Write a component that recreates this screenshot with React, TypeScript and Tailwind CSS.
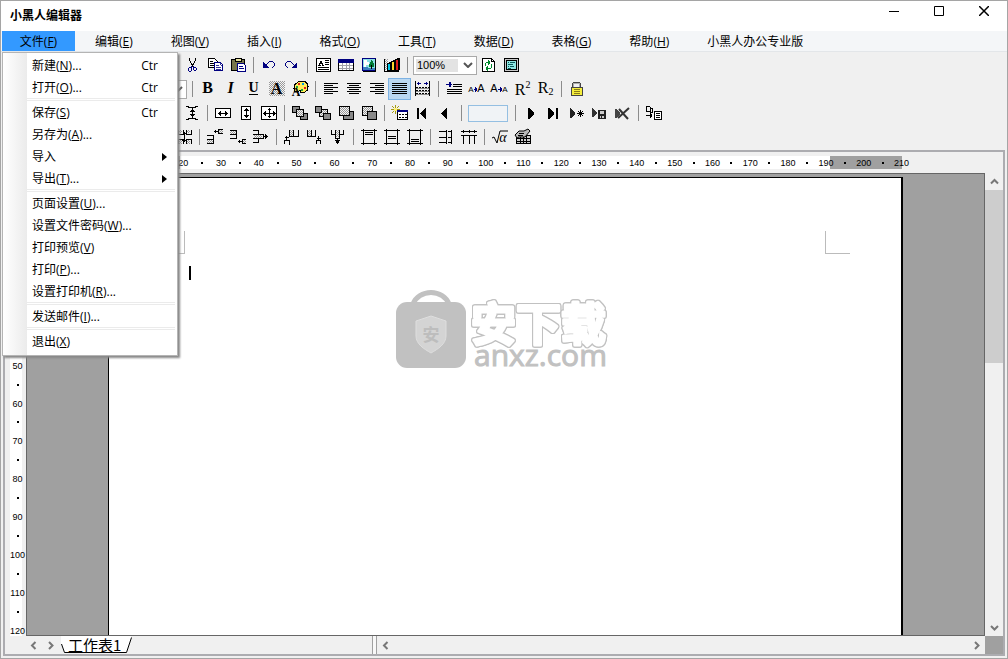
import { Fragment } from 'react'
import type { ReactNode } from 'react'

type MenuEntry = { text: string; hotkey?: string; dots?: boolean; shortcut?: string; submenu?: boolean }

const MENUS: MenuEntry[] = [
  { text: '编辑', hotkey: 'E' },
  { text: '视图', hotkey: 'V' },
  { text: '插入', hotkey: 'I' },
  { text: '格式', hotkey: 'O' },
  { text: '工具', hotkey: 'T' },
  { text: '数据', hotkey: 'D' },
  { text: '表格', hotkey: 'G' },
  { text: '帮助', hotkey: 'H' },
  { text: '小黑人办公专业版' },
]

const FILE_MENU: MenuEntry[][] = [
  [
    { text: '新建', hotkey: 'N', dots: true, shortcut: 'Ctr' },
    { text: '打开', hotkey: 'O', dots: true, shortcut: 'Ctr' },
  ],
  [
    { text: '保存', hotkey: 'S', shortcut: 'Ctr' },
    { text: '另存为', hotkey: 'A', dots: true },
    { text: '导入', submenu: true },
    { text: '导出', hotkey: 'T', dots: true, submenu: true },
  ],
  [
    { text: '页面设置', hotkey: 'U', dots: true },
    { text: '设置文件密码', hotkey: 'W', dots: true },
    { text: '打印预览', hotkey: 'V' },
    { text: '打印', hotkey: 'P', dots: true },
    { text: '设置打印机', hotkey: 'R', dots: true },
  ],
  [{ text: '发送邮件', hotkey: 'I', dots: true }],
  [{ text: '退出', hotkey: 'X' }],
]

function Label({ item }: { item: MenuEntry }) {
  return (
    <span className="whitespace-nowrap">
      {item.text}
      {item.hotkey && (
        <>
          (<span className="underline underline-offset-1">{item.hotkey}</span>)
        </>
      )}
      {item.dots && '...'}
    </span>
  )
}

function Tool({ label, active, children }: { label: string; active?: boolean; children: ReactNode }) {
  return (
    <button
      aria-label={label}
      className={`h-[22px] w-[23px] shrink-0 ${active ? 'bg-[#b9d7f1] outline outline-1 -outline-offset-1 outline-[#7db2e3]' : ''}`}
    >
      <svg width="23" height="22" viewBox="0 0 23 22" fill="none" stroke="#000" shapeRendering="crispEdges">
        <defs>
          <pattern id="dither" width="2" height="2" patternUnits="userSpaceOnUse">
            <rect width="2" height="2" fill="#f4f4f4" stroke="none" />
            <path d="M0 0h1v1h-1zM1 1h1v1h-1z" fill="#999" stroke="none" />
          </pattern>
        </defs>
        {children}
      </svg>
    </button>
  )
}

function Sep() {
  return (
    <span className="flex h-[22px] w-2 shrink-0 justify-center py-[3px]">
      <span className="w-px bg-[#8c8c8c]" />
    </span>
  )
}

function Lines({ rows }: { rows: [number, number][] }) {
  return <path d={rows.map(([x, w], i) => `M${x} ${5.5 + i * 2}h${w}`).join('')} />
}

const LEFT: [number, number][] = [[5, 14], [5, 9], [5, 14], [5, 9], [5, 14], [5, 9]]
const CENTER: [number, number][] = [[5, 14], [7, 10], [5, 14], [7, 10], [5, 14], [7, 10]]
const RIGHT: [number, number][] = [[5, 14], [10, 9], [5, 14], [10, 9], [5, 14], [10, 9]]
const FULL: [number, number][] = [[4, 15], [4, 15], [4, 15], [4, 15], [4, 15], [4, 15]]

function Letter({ children, className, x = 11.5, y = 15 }: { children: string; className: string; x?: number; y?: number }) {
  return (
    <text x={x} y={y} textAnchor="middle" fill="#000" stroke="none" className={className}>
      {children}
    </text>
  )
}

function Toolbars() {
  return (
    <div className="shrink-0 overflow-hidden py-px">
      {/* standard */}
      <div className="flex h-6 items-center pl-[179px]">
        <Tool label="剪切">
          <path d="M9.5 4v3M15.5 4v3M10.5 7v2M14.5 7v2M11.5 9v2M13.5 9v2M12.5 10v3" />
          <path d="M11.5 12v2M13.5 12v2M8.5 14v3M9 13.5h2M9 17.5h2M11.5 14v3M13.5 13v3M14 13.5h2M16.5 14v2M14 16.5h2" stroke="#000080" />
        </Tool>
        <Tool label="复制">
          <path d="M5.5 4.5h6l3 3v6h-9z" fill="#fff" />
          <path d="M7 7.5h3M7 9.5h4M7 11.5h4" />
          <path d="M11.5 8.5h6l2 2v6h-8z" fill="#fff" stroke="#000080" />
          <path d="M17.5 8v3h2M13 11.5h3M13 13.5h5M13 15.5h5" stroke="#000080" strokeWidth="0.8" />
        </Tool>
        <Tool label="粘贴">
          <path d="M5.5 5.5h13v11h-13z" fill="#77764b" />
          <path d="M9 4.5h6v3h-6z" fill="#e8e3a0" />
          <path d="M11.5 9.5h6l2 2v6h-8z" fill="#fff" stroke="#000080" />
          <path d="M13 12.5h4M13 14.5h5" stroke="#000080" />
        </Tool>
        <Sep />
        <Tool label="撤销">
          <path d="M6 8v6h6z" fill="#000080" stroke="none" />
          <path d="M9 10.5h1M10 9.5h1M11 8.5h1M12 7.5h4M16.5 8v1M17.5 9v3M16.5 12v1M15 13.5h1" stroke="#000080" />
        </Tool>
        <Tool label="恢复">
          <path d="M17 8v6h-6z" fill="#000080" stroke="none" />
          <path d="M13 10.5h1M12 9.5h1M11 8.5h1M7 7.5h4M6.5 8v1M5.5 9v3M6.5 12v1M7 13.5h1" stroke="#000080" />
        </Tool>
        <Sep />
        <Tool label="文本框">
          <path d="M5.5 4.5h14v13h-14z" fill="#fff" />
          <path d="M7 11.5h3M8.5 11v-2M9.5 9v-2M10.5 7v2M11.5 9v2M11 11.5h2M9 9.5h2M14 6.5h4M14 8.5h4M14 10.5h4M7 13.5h11M7 15.5h11" />
        </Tool>
        <Tool label="表格">
          <path d="M4.5 5.5h15v11h-15z" fill="#fff" />
          <path d="M5 11.5h14M5 14.5h14M8.5 9v7M12.5 9v7M15.5 9v7" stroke="#a0a0a8" />
          <path d="M4.5 5.5h15v11h-15z" />
          <path d="M4 5h16v4H4z" fill="#000080" stroke="none" />
        </Tool>
        <Tool label="图片">
          <path d="M5 4.5h13v12h-13z" fill="#8be0e6" stroke="#000080" />
          <path d="M18.5 5v13M6 17.5h13" />
          <path d="M7 6h3v2h2v3h-3v2h-2z" fill="#fff" stroke="none" />
          <path d="M14 6h1v1h1v2h1v4h-5v-3h1v-2h1z" fill="#007a34" stroke="none" />
          <path d="M6 13h5v1h7v2H6z" fill="#3c7fc0" stroke="none" />
          <path d="M14.5 11v4" />
        </Tool>
        <Tool label="图表">
          <path d="M5 5h3v11H5z" fill="url(#dither)" stroke="none" />
          <path d="M4.5 5v13M4 17.5h15" />
          <path d="M7.5 9.5h3v7h-3z" fill="#00c8e8" />
          <path d="M11.5 7.5h3v9h-3z" fill="#ffd52b" />
          <path d="M15.5 5.5h3v11h-3z" fill="#e01b1b" />
          <path d="M9 8.5h2M13 6.5h2M17 4.5h3M19.5 5v11" />
        </Tool>
        <Sep />
        <select
          aria-label="缩放"
          defaultValue="100%"
          className="ml-0.5 h-[19px] w-16 appearance-none border border-[#a9a9a9] bg-white bg-[linear-gradient(#e3e3e3,#e3e3e3)] bg-[length:42px_13px] bg-[position:2px_2px] bg-no-repeat pl-[3px] font-['Liberation_Sans',sans-serif] text-[11px] leading-none"
        >
          <option>100%</option>
        </select>
        <svg width="10" height="6" viewBox="0 0 10 6" className="mr-1 -ml-[14px] shrink-0" fill="none" stroke="#555" strokeWidth="2">
          <path d="M1 1l4 4 4-4" />
        </svg>
        <Tool label="刷新">
          <path d="M5.5 4.5h9l3 3v10h-12z" fill="#fff" />
          <path d="M14.5 4v3h3" />
          <path d="M8.5 12v-3M9 8.5h4M11.5 6v5M12.5 7v3M14.5 10v4M14 14.5h-4M10.5 12v5M9.5 13v3" stroke="#008a2c" />
        </Tool>
        <Tool label="属性">
          <path d="M4.5 4.5h14v13h-14z" fill="#c8c8c8" />
          <path d="M6.5 6.5h10v9h-10z" fill="#8fe6e2" />
          <path d="M8 8.5h1M10 8.5h5M8 10.5h5M8 12.5h1M10 12.5h4M8 14.5h3" stroke="#0c5c5c" />
        </Tool>
      </div>
      {/* formatting */}
      <div className="flex h-6 items-center pl-3">
        <span className="flex w-[175px] shrink-0 items-center">
          <select aria-label="字号" className="h-[19px] w-[174px] appearance-none border border-[#a9a9a9] bg-white" />
          <svg width="10" height="6" viewBox="0 0 10 6" className="-ml-[14px] shrink-0" fill="none" stroke="#555" strokeWidth="2">
            <path d="M1 1l4 4 4-4" />
          </svg>
        </span>
        <Sep />
        <Tool label="加粗">
          <Letter className="font-['Liberation_Serif',serif] text-[16px] font-bold">B</Letter>
        </Tool>
        <Tool label="倾斜">
          <Letter className="font-['Liberation_Serif',serif] text-[16px] font-bold italic">I</Letter>
        </Tool>
        <Tool label="下划线">
          <Letter y={14} className="font-['Liberation_Serif',serif] text-[14px] font-bold">U</Letter>
          <path d="M7 16.5h9" />
        </Tool>
        <Tool label="底纹">
          <rect x="4" y="3" width="16" height="15" fill="url(#dither)" stroke="none" />
          <Letter y={16} className="font-['Liberation_Serif',serif] text-[16px] font-bold">A</Letter>
        </Tool>
        <Tool label="字体颜色">
          <path d="M11 3.500h6l2 2 1 3-1 4-3 2h-3l-1-2-2 1h-3l-1-3 1-4z" fill="#ffee58" />
          <path d="M10 5h2v2h-2zM16 9h2v2h-2z" fill="#e01b1b" stroke="none" />
          <path d="M14 5h2v2h-2z" fill="#00a0e0" stroke="none" />
          <path d="M8 8h2v2H8zM13 11h2v2h-2z" fill="#1f9e3e" stroke="none" />
          <Letter x={8} y={18} className="font-['Liberation_Serif',serif] text-[12px] font-bold">A</Letter>
        </Tool>
        <Sep />
        <Tool label="左对齐"><Lines rows={LEFT} /></Tool>
        <Tool label="居中"><Lines rows={CENTER} /></Tool>
        <Tool label="右对齐"><Lines rows={RIGHT} /></Tool>
        <Tool label="两端对齐" active><Lines rows={FULL} /></Tool>
        <Tool label="分散对齐">
          <path d="M4.500 3v15M18.500 3v15" />
          <path d="M5 9.500h13M5 12.500h13M5 15.500h13" strokeDasharray="2 1" />
          <path d="M5 10.500h13M5 13.500h13M5 16.500h13" stroke="#888" />
          <path d="M6 5.500h4M7.500 4v3M13 5.500h4M15.500 4v3" stroke="#000080" />
        </Tool>
        <Sep />
        <Tool label="缩进">
          <path d="M4 6.500h6M8.500 4v5M7.500 4v5" stroke="#000080" />
          <path d="M11 6.500h9M11 8.500h9M5 11.500h15M5 13.500h15M5 15.500h15" />
        </Tool>
        <Tool label="增大字号">
          <Letter x={6} y={14} className="font-['Liberation_Sans',sans-serif] text-[8px]">A</Letter>
          <Letter x={16} y={14} className="font-['Liberation_Sans',sans-serif] text-[11px]">A</Letter>
          <path d="M9 11.500h2M10.500 9v5M11.500 10v3" stroke="#000080" />
        </Tool>
        <Tool label="减小字号">
          <Letter x={6} y={14} className="font-['Liberation_Sans',sans-serif] text-[11px]">A</Letter>
          <Letter x={17} y={14} className="font-['Liberation_Sans',sans-serif] text-[8px]">A</Letter>
          <path d="M10 11.500h2M12.500 9v5M13.500 10v3" stroke="#000080" />
        </Tool>
        <Tool label="上标">
          <Letter x={9} y={17} className="font-['Liberation_Serif',serif] text-[16px]">R</Letter>
          <Letter x={17} y={10} className="font-['Liberation_Serif',serif] text-[10px]">2</Letter>
        </Tool>
        <Tool label="下标">
          <Letter x={9} y={15} className="font-['Liberation_Serif',serif] text-[16px]">R</Letter>
          <Letter x={17} y={17} className="font-['Liberation_Serif',serif] text-[10px]">2</Letter>
        </Tool>
        <Sep />
        <Tool label="锁定">
          <path d="M7.500 10v-4l2-2h4l2 2v4" stroke="#444" />
          <path d="M8.500 10v-4l1-1h4l1 1v4" stroke="#aaa" />
          <path d="M6.500 9.500h11v8h-11z" fill="#f5ee3c" stroke="#444" />
          <path d="M9 11.500h6M9 13.500h6M9 15.500h6" stroke="#8a7c1a" />
        </Tool>
      </div>
      {/* arrange and records */}
      <div className="flex h-6 items-center pl-[179px]">
        <Tool label="行高">
          <path d="M6 4.500h3M15 4.500h3M8 5.500h8M6 17.500h3M15 17.500h3M8 16.500h8M12.500 6v10M11 8.500h3M10 9.500h5M10 12.500h5M11 13.500h3" />
        </Tool>
        <Sep />
        <Tool label="等宽">
          <path d="M4.500 6.500h15v9h-15z" fill="#fff" />
          <path d="M7 11.500h10M8.500 10v3M9.500 9v5M15.500 10v3M14.500 9v5" />
        </Tool>
        <Tool label="等高">
          <path d="M7.500 4.500h9v13h-9z" fill="#fff" />
          <path d="M12.500 6v10M11 7.500h3M10 8.500h5M11 14.500h3M10 13.500h5" />
        </Tool>
        <Tool label="等大">
          <path d="M4.500 4.500h15v13h-15z" fill="#fff" />
          <path d="M12.500 6v10M6 11.500h13M11 7.500h3M11 14.500h3M7.500 10v3M8.500 9v5M17.500 10v3M16.500 9v5" />
        </Tool>
        <Sep />
        <Tool label="置于顶层">
          <path d="M4.500 4.500h7v6h-7zM12.500 11.500h7v6h-7z" fill="#888" />
          <path d="M8.500 7.500h7v7h-7z" fill="url(#dither)" />
        </Tool>
        <Tool label="置于底层">
          <path d="M8.500 7.500h8v7h-8z" fill="url(#dither)" />
          <path d="M4.500 4.500h6v6h-6zM12.500 11.500h7v6h-7z" fill="#888" />
        </Tool>
        <Tool label="上移一层">
          <path d="M9.500 9.500h10v8h-10z" fill="#888" />
          <path d="M5.500 4.500h10v9h-10z" fill="url(#dither)" />
        </Tool>
        <Tool label="下移一层">
          <path d="M5.500 4.500h10v9h-10z" fill="url(#dither)" />
          <path d="M10.500 9.500h9v8h-9z" fill="#888" />
        </Tool>
        <Sep />
        <Tool label="数据向导">
          <path d="M7.500 3v3M7.500 9v3M3 7.500h3M9 7.500h3M4 4l2 2M11 4l-2 2M4 11l2-2" stroke="#a59b12" />
          <path d="M6 6h3v3H6z" fill="#fff176" stroke="none" />
          <path d="M9.500 9.500h10v8h-10z" fill="#fff" />
          <path d="M9 8h11v2H9z" fill="#000080" stroke="none" />
          <path d="M11 12.500h2M14 12.500h2M17 12.500h2M11 15.500h2M14 15.500h2M17 15.500h2" />
        </Tool>
        <Tool label="首记录">
          <path d="M6 6h2v11H6zM15 6v11h-1l-5-5v-1l5-5z" fill="#000" stroke="none" />
        </Tool>
        <Tool label="上一条">
          <path d="M13 6v11h-1l-5-5v-1l5-5z" fill="#000" stroke="none" />
        </Tool>
        <Sep />
        <input aria-label="记录" className="mx-[3px] h-[17px] w-10 border border-[#94bfe2] bg-[#f0f3f6] px-1 text-[11px]" />
        <Sep />
        <Tool label="下一条">
          <path d="M9 6v11h1l5-5v-1l-5-5z" fill="#000" stroke="none" />
        </Tool>
        <Tool label="末记录">
          <path d="M6 6v11h1l5-5v-1l-5-5zM14 6h2v11h-2z" fill="#000" stroke="none" />
        </Tool>
        <Tool label="新记录">
          <path d="M5 6v10h1l4-4v-1l-4-5z" fill="#222" stroke="none" />
          <path d="M15.500 8v7M12 11.500h7M13 9l5 5M18 9l-5 5" />
        </Tool>
        <Tool label="保存记录">
          <path d="M4 6v9h1l4-4-4-5z" fill="#333" stroke="none" />
          <path d="M10 8h8v9h-8z" fill="#222" stroke="none" />
          <path d="M12 9h4v3h-4zM12 14h1v2h-1zM14 14h2v2h-2z" fill="#ccc" stroke="none" />
        </Tool>
        <Tool label="删除记录">
          <path d="M4 7v9h1l4-4v-1l-4-4z" fill="#444" stroke="none" />
          <path d="M8 7l9 10M18 6l-11 10" stroke="#333" strokeWidth="2" shapeRendering="auto" />
        </Tool>
        <Sep />
        <Tool label="邮件合并">
          <path d="M4.500 4.500h3l1 1v4h-4zM8.500 6.500h2v4h-3" />
          <path d="M4 13.500h6M8.500 11v5M9.500 12v3" />
          <path d="M12.500 9.500h7v8h-7z" fill="#fff" />
          <path d="M14 11.500h4M14 13.500h4M14 15.500h4" />
        </Tool>
      </div>
      {/* table cells */}
      <div className="flex h-6 items-center pl-[171px]">
        <Tool label="拆分">
          <path d="M6 4v4h5v-4M14 4v4h5v-4M6 18v-5h5v5M14 18v-5h5v5M12.500 6v10M11 7.500h3M10 14.500h5" />
          <path d="M7 4h3v3H7zM15 4h3v3h-3zM7 14h3v4H7zM15 14h3v4h-3z" fill="url(#dither)" stroke="none" />
        </Tool>
        <Sep />
        <Tool label="左上插入">
          <path d="M11 5.500h4M12.500 4v3M4 9.500h7M4 13.500h7M4 17.500h7M10.500 9v9" />
          <path d="M16 4h4v4h-4zM4 14h6v3H4z" fill="url(#dither)" stroke="none" />
          <path d="M20 3.500h-4.500v4h4.500" />
        </Tool>
        <Tool label="左下插入">
          <path d="M4 4.500h7M4 8.500h7M4 12.500h7M10.500 4v9M12 15.500h4M13.500 14v3" />
          <path d="M4 5h6v3H4zM16 14h4v3h-4z" fill="url(#dither)" stroke="none" />
          <path d="M20 13.500h-3.500v4h3.500" />
        </Tool>
        <Tool label="向右">
          <path d="M4 4.500h6M4 8.500h6M4 12.500h6M4 16.500h6M9.500 5v4M9.500 13v4M10 8.500h4v4h-4M14 10.500h5M16.500 8v5M17.500 9v3" />
          <path d="M5 9h8v3H5z" fill="url(#dither)" stroke="none" />
        </Tool>
        <Sep />
        <Tool label="列前插入">
          <path d="M9.500 4v7M9 10.500h10M13.500 4v6M18.500 4v7M6.500 10v4M5 11.500h4M4 17.500v-3h5v4" />
          <path d="M10 4h3v6h-3z" fill="url(#dither)" stroke="none" />
        </Tool>
        <Tool label="列后插入">
          <path d="M4.500 4v6M4 10.500h9M8.500 4v6M12.500 4v7M15.500 10v4M14 12.500h4M13.500 18v-3.500h4v3.500" />
          <path d="M5 4h3v6H5z" fill="url(#dither)" stroke="none" />
        </Tool>
        <Tool label="向下">
          <path d="M5.500 4v4M5 8.500h4M9.500 4v8h4v-8M14 8.500h4M17.500 4v4M11.500 12v6M9 14.500h5M10 15.500h3M10 16.500h3" />
          <path d="M10 4h3v7h-3z" fill="url(#dither)" stroke="none" />
        </Tool>
        <Sep />
        <Tool label="顶端对齐">
          <path d="M4 4.500h16M4 17.500h16M6.500 3v16M17.500 3v16M8 6.500h8M8 8.500h8" />
        </Tool>
        <Tool label="垂直居中">
          <path d="M4 4.500h16M4 17.500h16M6.500 3v16M17.500 3v16M8 10.500h8M8 12.500h8" />
        </Tool>
        <Tool label="底端对齐">
          <path d="M4 4.500h16M4 17.500h16M6.500 3v16M17.500 3v16M8 13.500h8M8 15.500h8" />
        </Tool>
        <Sep />
        <Tool label="平均行">
          <path d="M5 5.500h8M5 11.500h8M5 16.500h8M12.500 4v14M14 5.500h4M14 11.500h4M14 16.500h4M17.500 4v14" />
        </Tool>
        <Tool label="平均列">
          <path d="M4 5.500h16M6.500 4v3M12.500 4v3M17.500 4v3M4 9.500h16M6.500 9v9M12.500 9v9M17.500 9v9" />
        </Tool>
        <Sep />
        <Tool label="公式">
          <path d="M4 12l2-1 3 6 3-12h8" shapeRendering="auto" />
          <Letter x={15} y={16} className="font-['Liberation_Serif',serif] text-[14px] italic">α</Letter>
        </Tool>
        <Tool label="绘制表格">
          <path d="M5.500 9.500h14v8h-14z" fill="#ccc" />
          <path d="M6 12.500h13M6 15.500h13M9.500 10v8M12.500 10v8M15.500 10v8" />
          <path d="M4 9l4-4h5l4-2 2 2-5 6H8l-2 1z" fill="#bbb" shapeRendering="auto" />
          <path d="M8 7.500h5M7 9.500h5" />
        </Tool>
      </div>
    </div>
  )
}

function FileMenu() {
  return (
    <div className="absolute top-full left-0 z-10 mt-px w-44 border border-[#b4b4b4] bg-white bg-[linear-gradient(to_right,#fff,#ebebeb)] bg-[length:24px_100%] bg-no-repeat pt-px pb-[3px] shadow-[2px_2px_2px_#888]">
      {FILE_MENU.map((group, i) => (
        <Fragment key={i}>
          {i > 0 && <div className="mr-0.5 ml-6 h-[3px] border-y border-[#ebebeb]" />}
          {group.map((item) => (
            <button key={item.text} className="flex h-[22px] w-full items-center pt-0.5 pr-2 pl-[29px]">
              <Label item={item} />
              {item.shortcut && <span className="mr-[11px] ml-auto">{item.shortcut}</span>}
              {item.submenu && (
                <svg width="5" height="8" viewBox="0 0 5 8" className="mr-0.5 ml-auto">
                  <path d="M0 0l5 4-5 4z" />
                </svg>
              )}
            </button>
          ))}
        </Fragment>
      ))}
    </div>
  )
}

function ScrollArrow({ label, d, className }: { label: string; d: string; className: string }) {
  return (
    <button aria-label={label} className={`flex shrink-0 items-center justify-center ${className}`}>
      <svg width="9" height="9" viewBox="0 0 9 9" fill="none" stroke="#777" strokeWidth="2">
        <path d={d} />
      </svg>
    </button>
  )
}

// one cell per 5 mm: even cells hold the number, odd cells the tick
function rulerCells(count: number) {
  return Array.from({ length: count }, (_, i) => (
    <span key={i} className="flex items-center justify-center whitespace-nowrap">
      {i % 2 ? (i + 1) * 5 : <i className="size-0.5 bg-black" />}
    </span>
  ))
}

function Watermark() {
  return (
    <svg width="214" height="84" viewBox="0 0 214 84" className="shrink-0">
      <path d="M18 18a19 17 0 0 1 36 0" fill="none" stroke="#c1c1c1" strokeWidth="5" />
      <rect x="1" y="16" width="70" height="66" rx="11" fill="#c1c1c1" />
      <path d="M36 30l15 5v15c0 8-8 13-15 17-7-4-15-9-15-17V35z" fill="#d4d4d4" stroke="#dedede" />
      <text x="36" y="55" textAnchor="middle" fill="#bdbdbd" className="font-['Noto_Sans_CJK_SC',sans-serif] text-[17px] font-bold">
        安
      </text>
      <text
        x="76"
        y="55"
        fill="#fff"
        stroke="#fff"
        strokeWidth="3"
        strokeLinejoin="round"
        className="font-['Noto_Sans_CJK_SC',sans-serif] text-[45px] font-bold [filter:drop-shadow(1px_0_#c1c1c1)_drop-shadow(-1px_0_#c1c1c1)_drop-shadow(0_1px_#c1c1c1)_drop-shadow(0_-1px_#c1c1c1)]"
      >
        安下载
      </text>
      <text x="79" y="80" fill="#c1c1c1" stroke="#c1c1c1" className="font-['Open_Sans',sans-serif] text-[30px]">anxz.com</text>
    </svg>
  )
}

export default function App() {
  return (
    <div className="flex h-screen min-h-[480px] flex-col border border-[#a5a5a5] bg-[#f0f0f0] font-['Open_Sans','Noto_Sans_CJK_SC',sans-serif] text-xs text-black">
      <header className="flex h-[30px] shrink-0 justify-between bg-white">
        <h1 className="pl-[9px] font-semibold leading-[30px]">小黑人编辑器</h1>
        <div className="flex h-5 pr-px">
          <button aria-label="最小化" className="flex w-[45px] items-center justify-center">
            <svg width="10" height="10" stroke="#000"><path d="M0 5.500h10" /></svg>
          </button>
          <button aria-label="最大化" className="flex w-[45px] items-center justify-center">
            <svg width="10" height="10" stroke="#000" fill="none"><path d="M.5.5h9v9h-9z" /></svg>
          </button>
          <button aria-label="关闭" className="flex w-[45px] items-center justify-center">
            <svg width="10" height="10" stroke="#000" strokeWidth="1.500"><path d="M0 0l10 10M10 0L0 10" /></svg>
          </button>
        </div>
      </header>

      <nav className="flex h-[21px] shrink-0 gap-0.5 border-b border-[#e3e6e9] bg-[#f4f6f8] pl-px">
        <div className="relative">
          <button className="h-full w-[73px] bg-[#3399ff] pt-0.5">
            <Label item={{ text: '文件', hotkey: 'F' }} />
          </button>
          <FileMenu />
        </div>
        {MENUS.map((item) => (
          <button key={item.text} className="px-[18px] pt-0.5">
            <Label item={item} />
          </button>
        ))}
      </nav>

      <Toolbars />

      <main className="mx-0.5 mb-0.5 flex min-h-0 flex-1 flex-col border-2 border-[#acacb0]">
        <div className="flex h-[21px] shrink-0 items-center overflow-hidden pl-[103px] text-[9px]">
          <div className="relative h-[13px] w-[794px] shrink-0 font-['Liberation_Sans',sans-serif]">
            <div className="flex h-full">
              <span className="w-[72px] bg-[#a0a0a0]" />
              <span className="flex-1 bg-white" />
              <span className="w-[72px] bg-[#a0a0a0]" />
            </div>
            <div className="absolute inset-0 left-[9px] grid w-[794px] grid-cols-[repeat(42,minmax(0,1fr))]">{rulerCells(42)}</div>
          </div>
        </div>

        <div className="flex min-h-0 flex-1">
          <div className="w-[21px] shrink-0 overflow-hidden pt-[13px] pr-1 pl-[5px] font-['Liberation_Sans',sans-serif] text-[9px]">
            <div className="grid h-[454px] grid-rows-[repeat(24,minmax(0,1fr))] bg-white">{rulerCells(24)}</div>
          </div>
          <div className="flex min-w-0 flex-1 overflow-hidden border border-[#666] bg-[#a0a0a0] pt-[3px] pl-[81px]">
            <div className="w-[795px] shrink-0 border-t border-r-2 border-l border-black bg-white pt-[53px]">
              <div className="flex justify-between px-[51px]">
                <span className="h-[23px] w-[25px] border-r border-b border-[#bbb]" />
                <span className="h-[23px] w-[25px] border-b border-l border-[#bbb]" />
              </div>
              <div className="mt-3 ml-20 h-3.5 w-0.5 bg-black" />
              <div className="mt-1.5 flex justify-center pr-1.5">
                <Watermark />
              </div>
            </div>
          </div>
          <div className="flex w-[18px] shrink-0 flex-col">
            <ScrollArrow label="向上滚动" d="M1 6.500l3.500-3.500L8 6.500" className="h-[17px]" />
            <div className="h-[173px] shrink bg-[#cdcdcd]" />
            <ScrollArrow label="向下滚动" d="M1 3l3.500 3.500L8 3" className="mt-auto h-[17px]" />
          </div>
        </div>

        <footer className="flex h-[18px] shrink-0 pl-5">
          <ScrollArrow label="上一张" d="M6.500 1L3 4.500 6.500 8" className="w-[17px]" />
          <ScrollArrow label="下一张" d="M3 1l3.500 3.500L3 8" className="w-[17px]" />
          <button className="relative ml-0.5 w-[72px] text-left">
            <svg width="72" height="18" viewBox="0 0 72 18" className="absolute inset-0" fill="#fff" stroke="#000">
              <path d="M0 0h70l-5 16.500H4L0 8z" stroke="none" />
              <path d="M.5 8l3 8.500h62l5-15" />
            </svg>
            <span className="relative block pl-[7px] font-['Noto_Sans_CJK_SC',sans-serif] text-[15px] leading-[18px]">工作表1</span>
          </button>
          <div className="ml-[239px] w-[5px] shrink-0 border-x border-[#a0a0a0] bg-[#f8f8f8]" />
          <div className="flex flex-1 justify-between">
            <ScrollArrow label="向左滚动" d="M6.500 1L3 4.500 6.500 8" className="w-[17px]" />
            <ScrollArrow label="向右滚动" d="M3 1l3.500 3.500L3 8" className="w-[17px]" />
          </div>
          <div className="w-[18px] bg-[#a0a0a0]" />
        </footer>
      </main>
    </div>
  )
}
